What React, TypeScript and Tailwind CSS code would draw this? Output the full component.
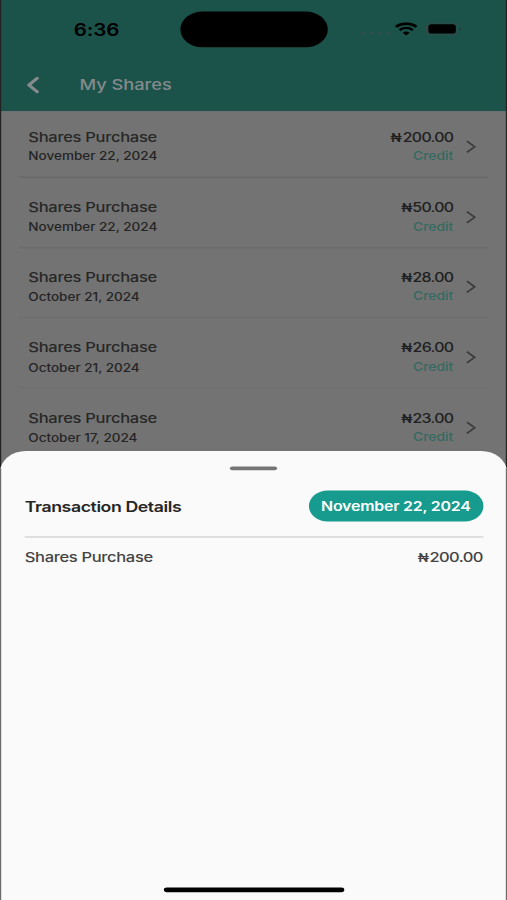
import { ChevronLeft } from "lucide-react";

const transactions = [
  { date: "November 22, 2024", amount: "200.00", line: "border-[#646464]" },
  { date: "November 22, 2024", amount: "50.00", line: "border-[#696969]" },
  { date: "October 21, 2024", amount: "28.00", line: "border-[#6d6d6d]" },
  { date: "October 21, 2024", amount: "26.00", line: "border-[#6f6f6f]" },
  { date: "October 17, 2024", amount: "23.00", line: "border-[#6f6f6f]" },
];

const Naira = () => (
  <span className="mr-[0.8px] inline-block origin-right scale-x-[0.88] font-['Roboto','Liberation_Sans',sans-serif] text-[13.5px] leading-none font-medium">
    ₦
  </span>
);

const StatusBar = () => (
  <div className="flex h-[60px] items-center">
    <div className="w-[153px] pt-px pl-[62.5px] text-[17.5px] leading-none font-semibold tracking-[-0.1px] text-black">
      6:36
    </div>
    <div className="h-[37px] w-[125px] rounded-full bg-black"></div>
    <div className="ml-[29px] flex items-center">
      <div className="mt-[8px] flex w-[28px] gap-1">
        {[0, 1, 2, 3].map((dot) => (
          <span key={dot} className="h-[3px] w-[3px] rounded-full bg-[#354f4d]"></span>
        ))}
      </div>
      <svg className="h-[14px] w-[19px]" viewBox="0 0 19 14" fill="none" stroke="#000">
        <path d="M.8 4.8C5.6.3 13.4.3 18.2 4.8" strokeWidth="2.7" />
        <path d="M3.9 8.2c3.2-3 8-3 11.2 0" strokeWidth="2.4" />
        <path d="M6.6 10.8c1.7-1.6 4.1-1.6 5.8 0L9.5 13.8z" fill="#000" stroke="none" />
      </svg>
      <svg className="ml-[7px] h-[14px] w-[31px]" viewBox="0 0 31 14" fill="none">
        <rect x="0.8" y="0.7" width="26.2" height="12.6" rx="4" stroke="#3a4a49" />
        <rect x="2.3" y="2.2" width="23.3" height="9.6" rx="2.8" fill="#000" />
        <path d="M28.3 5v4c2-.7 2-3.3 0-4z" fill="#263d3a" />
      </svg>
    </div>
  </div>
);

const Header = () => (
  <header className="h-[114.5px] bg-[#1b534b]">
    <StatusBar />
    <div className="flex h-[55.5px] items-center pl-[14px] text-[#858a8c]">
      <ChevronLeft className="h-7 w-7" strokeWidth={2.6} />
      <h1 className="ml-[25.5px] text-[15.5px] leading-none font-medium tracking-[-0.05px]">My Shares</h1>
    </div>
  </header>
);

const TransactionList = () => (
  <div className="-mt-[3.7px] px-4">
    {transactions.map((item, i) => (
      <div
        key={i}
        className={`flex h-[72.85px] items-center justify-between border-b pt-[10px] pr-[10.5px] pl-2 ${item.line}`}
      >
        <div className="pt-[1.6px]">
          <div className="text-[14px] leading-[20.5px] font-medium tracking-[-0.25px] text-[#272727]">
            Shares Purchase
          </div>
          <div className="text-[11.5px] leading-[21px] font-medium tracking-[-0.02px] text-[#242424]">{item.date}</div>
        </div>
        <div className="flex items-center">
          <div className="text-right">
            <div className="text-[13.5px] leading-5 font-medium tracking-[-0.6px] text-[#202020]">
              <Naira />
              {item.amount}
            </div>
            <div className="text-[11.8px] leading-5 font-medium text-[#346a61]">Credit</div>
          </div>
          <svg className="ml-[10px] h-[14px] w-[9px]" viewBox="0 0 9 14" fill="none" stroke="#3b3b3b" strokeWidth="1.6">
            <path d="M1 1.2 7.6 7 1 12.8" />
          </svg>
        </div>
      </div>
    ))}
  </div>
);

const DetailsSheet = () => (
  <section className="absolute inset-x-0 top-[466.5px] bottom-0 flex flex-col rounded-t-[22px] bg-[#fafafa] pr-[20.5px] pl-[21px]">
    <div className="mx-auto mt-4 h-1 w-10 rounded-full bg-[#757575]"></div>
    <div className="mt-[21.5px] flex h-[32px] items-center justify-between">
      <h2 className="text-[15px] leading-none font-semibold tracking-[-0.35px] text-[#252525]">Transaction Details</h2>
      <span className="flex h-[32px] w-[147.5px] items-center justify-center rounded-full bg-[#169b8e] pt-[2px] text-[13.5px] leading-none font-semibold tracking-[-0.18px] whitespace-nowrap text-white">
        November 22, 2024
      </span>
    </div>
    <div className="mt-[15px] h-[2px] bg-[#dedede]"></div>
    <div className="mt-[9.5px] flex justify-between text-[14px] leading-5 font-medium text-[#444]">
      <span className="tracking-[-0.28px]">Shares Purchase</span>
      <span className="tracking-[-0.5px]">
        <Naira />
        200.00
      </span>
    </div>
    <div className="mx-auto mt-auto mb-2 h-[5px] w-[153px] rounded-full bg-black"></div>
  </section>
);

const App = () => {
  return (
    <div className="h-[900px] w-[507px] overflow-hidden bg-[#737373]">
      {/* 430x932 device screen, fitted to the frame */}
      <main className="relative h-[932px] w-[430px] origin-top-left scale-x-[1.17907] scale-y-[0.96567] overflow-hidden bg-[#737373] font-['Inter','Noto_Sans',sans-serif]">
        <Header />
        <TransactionList />
        <div className="absolute inset-0 border-r border-l border-[#222]"></div>
        <DetailsSheet />
        <div className="absolute top-[485px] bottom-0 left-0 w-px bg-[#6b6b6b]"></div>
        <div className="absolute top-[485px] right-0 bottom-0 w-px bg-[#6b6b6b]"></div>
      </main>
    </div>
  );
};

export default App;
